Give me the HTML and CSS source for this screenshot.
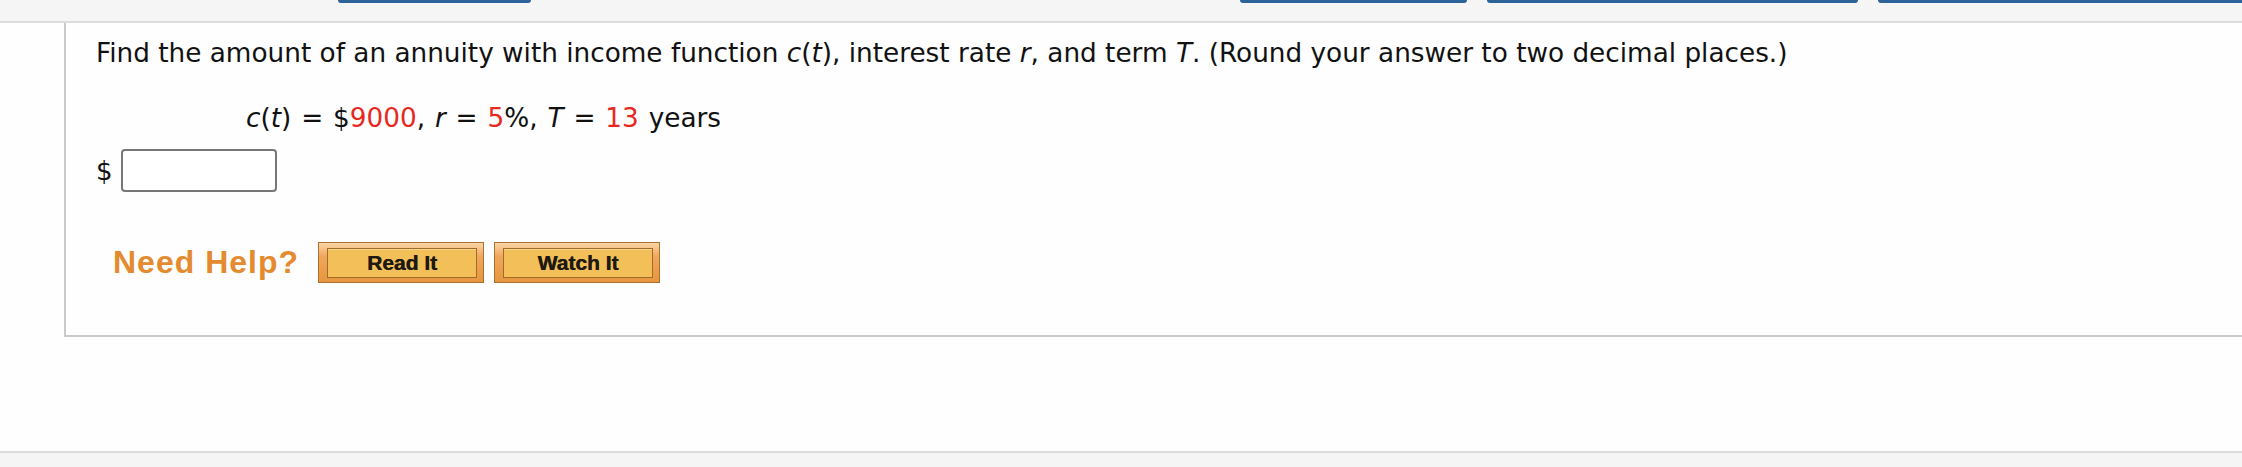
FILE: index.html
```html
<!DOCTYPE html>
<html lang="en">
<head>
<meta charset="utf-8">
<title>Annuity question</title>
<link rel="stylesheet" href="styles.css">
</head>
<body>
<div class="topbar">
  <div class="tab tab-a"></div>
  <div class="tab tab-b"></div>
  <div class="tab tab-c"></div>
  <div class="tab tab-d"></div>
</div>
<div class="qbox">
  <p class="qtext">Find the amount of an annuity with income function <i>c</i>(<i>t</i>), interest rate <i>r</i>, and term <i>T</i>. (Round your answer to two decimal places.)</p>
  <p class="given"><i>c</i>(<i>t</i>) = $<span class="red">9000</span>, <i>r</i> = <span class="red">5</span>%, <i>T</i> = <span class="red">13</span> years</p>
  <div class="answer">
    <span class="dollar">$</span>
    <input class="field" type="text" aria-label="answer">
  </div>
  <div class="help">
    <span class="needhelp">Need Help?</span>
    <button class="hbtn" type="button"><span class="hbtn-in">Read It</span></button>
    <button class="hbtn" type="button"><span class="hbtn-in">Watch It</span></button>
  </div>
</div>
<div class="footer"></div>
</body>
</html>
```
FILE: styles.css
```css
html, body {
  margin: 0;
  padding: 0;
  background: #fefefe;
  overflow: hidden;
}
body {
  font-family: "DejaVu Sans", Verdana, sans-serif;
  color: #111;
}
.topbar {
  display: flex;
  height: 21px;
  background: #f5f5f5;
  border-bottom: 2px solid #dcdcdc;
}
.tab {
  height: 3px;
  background: #2c6399;
  border-radius: 0 0 5px 5px;
}
.tab-a { margin-left: 338px; width: 193px; }
.tab-b { margin-left: 709px; width: 227px; }
.tab-c { margin-left: 20px; width: 371px; }
.tab-d { margin-left: 20px; flex: 1; border-radius: 0 0 0 5px; }

.qbox {
  margin-left: 64px;
  border-left: 2px solid #cacaca;
  border-bottom: 2px solid #cacaca;
  padding-top: 15px;
  padding-left: 30px;
  box-sizing: border-box;
  height: 314px;
}
.qtext {
  margin: 0;
  font-size: 26.3px;
  line-height: 30px;
  white-space: nowrap;
}
.given {
  margin: 35px 0 0 150px;
  font-size: 26.3px;
  line-height: 30px;
  word-spacing: 1.5px;
  white-space: nowrap;
}
.red { color: #e8281e; }
.answer {
  display: flex;
  align-items: center;
  gap: 8px;
  margin-top: 16px;
  height: 43px;
}
.dollar {
  font-size: 26px;
  line-height: 30px;
}
.field {
  width: 156px;
  height: 43px;
  box-sizing: border-box;
  border: 2px solid #777;
  border-radius: 4px;
  background: #fff;
  margin: 0;
  padding: 0 6px;
}
.help {
  display: flex;
  align-items: center;
  margin-top: 50px;
  height: 41px;
}
.needhelp {
  width: 222px;
  padding-left: 17px;
  box-sizing: border-box;
  font-family: "Liberation Sans", Arial, sans-serif;
  font-weight: bold;
  font-size: 32px;
  letter-spacing: 1px;
  color: #e48b30;
  flex: none;
}
.hbtn {
  width: 166px;
  height: 41px;
  box-sizing: border-box;
  margin: 0 10px 0 0;
  padding: 5px 6px 4px 8px;
  border: 1px solid #a8722f;
  background: linear-gradient(#fad5a6 0%, #f0a65a 35%, #e8963f 100%);
  flex: none;
  cursor: pointer;
}
.hbtn-in {
  display: flex;
  align-items: center;
  justify-content: center;
  height: 100%;
  box-sizing: border-box;
  border: 1px solid #a06c2c;
  box-shadow: inset 0 1px 0 #f8d68c;
  background: #f2bf58;
  font-family: "Liberation Sans", Arial, sans-serif;
  font-weight: bold;
  font-size: 21px;
  color: #1e1a12;
  text-shadow: 0.4px 0 0 #1e1a12;
}
.footer {
  margin-top: 114px;
  height: 40px;
  background: #f5f5f5;
  border-top: 2px solid #dcdcdc;
}
```
